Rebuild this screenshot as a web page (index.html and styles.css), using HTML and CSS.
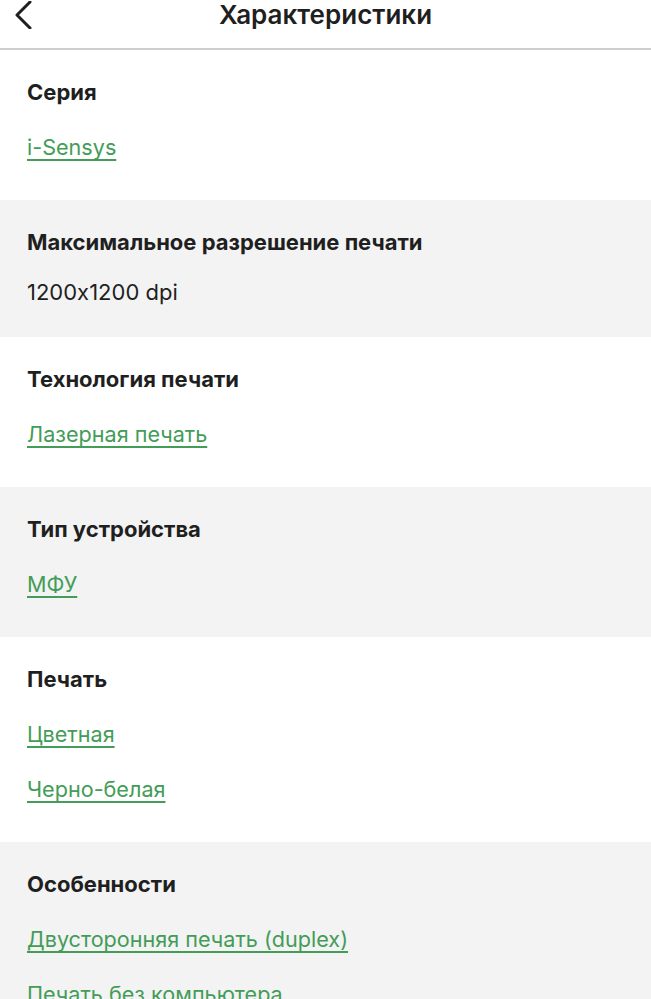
FILE: index.html
```html
<!DOCTYPE html>
<html lang="ru">
<head>
<meta charset="utf-8">
<title>Характеристики</title>
<link rel="stylesheet" href="styles.css">
</head>
<body>
<header class="topbar">
  <button class="topbar__back" aria-label="Назад">
    <svg width="20" height="28" viewBox="0 0 20 28"><path d="M16 1 L3 14 L16 27" fill="none" stroke="#1f1f1f" stroke-width="3" stroke-linecap="round" stroke-linejoin="round"/></svg>
  </button>
  <h1 class="topbar__title">Характеристики</h1>
</header>
<main class="specs">
  <section class="spec">
    <h2 class="spec__name">Серия</h2>
    <div class="spec__links"><a class="spec__link" href="#">i-Sensys</a></div>
  </section>
  <section class="spec spec--alt">
    <h2 class="spec__name">Максимальное разрешение печати</h2>
    <p class="spec__value">1200x1200 dpi</p>
  </section>
  <section class="spec">
    <h2 class="spec__name">Технология печати</h2>
    <div class="spec__links"><a class="spec__link" href="#">Лазерная печать</a></div>
  </section>
  <section class="spec spec--alt">
    <h2 class="spec__name">Тип устройства</h2>
    <div class="spec__links"><a class="spec__link" href="#">МФУ</a></div>
  </section>
  <section class="spec">
    <h2 class="spec__name">Печать</h2>
    <div class="spec__links"><a class="spec__link" href="#">Цветная</a><a class="spec__link" href="#">Черно-белая</a></div>
  </section>
  <section class="spec spec--alt">
    <h2 class="spec__name">Особенности</h2>
    <div class="spec__links"><a class="spec__link" href="#">Двусторонняя печать (duplex)</a><a class="spec__link" href="#">Печать без компьютера</a></div>
  </section>
</main>
</body>
</html>
```
FILE: styles.css
```css
* { box-sizing: border-box; }
html, body { margin: 0; padding: 0; background: #fff; }
body {
  font-family: Inter, "Noto Sans", sans-serif;
  font-feature-settings: "calt" 0;
  color: #1f1f1f;
  width: 651px;
  overflow: hidden;
}
.topbar {
  height: 50px;
  border-bottom: 2px solid #cfcfcf;
  display: flex;
  justify-content: center;
  position: relative;
}
.topbar__back {
  position: absolute;
  left: 14px;
  top: 0;
  border: 0;
  background: none;
  padding: 0;
  width: 20px;
  height: 30px;
}
.topbar__back svg { display: block; }
.topbar__title {
  margin: 0;
  font-size: 26px;
  font-weight: 600;
  line-height: 30px;
}
.spec {
  padding: 28px 27px 31px;
  background: #fff;
}
.spec--alt { background: #f3f3f3; }
.spec__name {
  margin: 0;
  font-size: 22px;
  font-weight: 700;
  line-height: 28px;
}
.spec__value {
  margin: 22px 0 0;
  font-size: 22px;
  line-height: 28px;
}
.spec__links {
  display: flex;
  flex-direction: column;
  align-items: flex-start;
  padding-bottom: 8px;
}
.spec__link {
  margin-top: 27px;
  font-size: 21.6px;
  line-height: 28px;
  color: #439c58;
  text-decoration: underline;
  text-decoration-thickness: 1.5px;
  text-underline-offset: 4px;
}
```
